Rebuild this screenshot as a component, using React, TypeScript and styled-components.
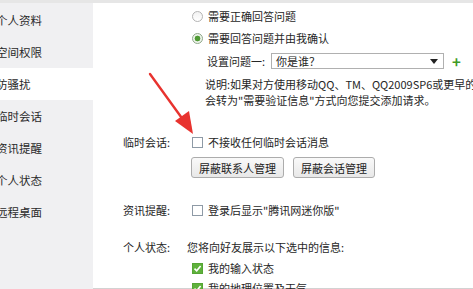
import styled, { createGlobalStyle } from 'styled-components'

const GlobalStyle = createGlobalStyle`
  html, body {
    margin: 0;
    padding: 0;
    background: #ffffff;
  }
  body {
    font-family: "Noto Sans CJK SC", "Liberation Sans", sans-serif;
    font-size: 11px;
    color: #262626;
  }
`

const Window = styled.div`
  position: relative;
  width: 473px;
  height: 289px;
  overflow: hidden;
  display: flex;
  border-top: 3px solid #e6e6e6;
  box-shadow: inset 0 -1px 0 #d2d2d2;
  box-sizing: border-box;
  &::before {
    content: '';
    position: absolute;
    left: 0;
    right: 0;
    top: -1px;
    height: 1px;
    background: #cfcfcf;
  }
`

const Sidebar = styled.nav`
  width: 93px;
  flex-shrink: 0;
  background: #f0f0f2;
  padding-top: 1px;
  overflow: hidden;
`

const NavItem = styled.div<{ $active?: boolean }>`
  height: 32px;
  display: flex;
  align-items: center;
  margin-left: -4px;
  font-size: 11.5px;
  white-space: nowrap;
  background: ${p => (p.$active ? '#ffffff' : 'transparent')};
  color: #2a2a2a;
`

const Main = styled.main`
  flex: 1;
  padding-left: 30px;
  display: flex;
  flex-direction: column;
`

const Section = styled.div<{ $gap: number }>`
  display: grid;
  grid-template-columns: 64px 1fr;
  margin-top: ${p => p.$gap}px;
`

const Label = styled.div`
  height: 22px;
  display: flex;
  align-items: center;
  white-space: nowrap;
`

const Body = styled.div`
  display: flex;
  flex-direction: column;
  min-width: 0;
`

const OptionRow = styled.label<{ $h?: number }>`
  height: ${p => p.$h ?? 22}px;
  display: flex;
  align-items: center;
  gap: 5px;
  padding-left: 5px;
  white-space: nowrap;
`

const Radio = styled.span<{ $checked?: boolean }>`
  width: 11px;
  height: 11px;
  box-sizing: border-box;
  border-radius: 50%;
  border: 1px solid ${p => (p.$checked ? '#8fa88a' : '#b4b4b4')};
  background: ${p =>
    p.$checked
      ? 'radial-gradient(circle, #4f9a34 0 2.6px, #eef4ec 3.2px)'
      : 'linear-gradient(#f2f2f2, #ffffff)'};
`

const Check = styled.span<{ $checked?: boolean }>`
  width: 11px;
  height: 11px;
  box-sizing: border-box;
  border: 1px solid ${p => (p.$checked ? '#55a534' : '#8e9aa6')};
  background: ${p => (p.$checked ? '#5fb13c' : '#ffffff')};
  display: flex;
  align-items: center;
  justify-content: center;
`

const QuestionRow = styled.div`
  height: 24px;
  display: flex;
  align-items: center;
  padding-left: 20px;
  white-space: nowrap;
`

const Select = styled.div`
  margin-left: 6px;
  width: 173px;
  height: 16px;
  box-sizing: border-box;
  border: 1px solid #b0b0b0;
  background: #fff;
  display: flex;
  align-items: center;
  justify-content: space-between;
  padding: 0 5px 0 4px;
`

const Caret = styled.span`
  width: 0;
  height: 0;
  border-left: 4px solid transparent;
  border-right: 4px solid transparent;
  border-top: 5px solid #222;
`

const AddButton = styled.span`
  margin-left: 8px;
  color: #3f9a27;
  font-size: 15px;
  font-weight: bold;
  line-height: 1;
`

const Note = styled.p`
  margin: 3px 0 0 18px;
  line-height: 16px;
  white-space: nowrap;
`

const ButtonRow = styled.div`
  display: flex;
  gap: 9px;
  margin-top: 4px;
  padding-left: 4px;
`

const Button = styled.button<{ $w: number }>`
  width: ${p => p.$w}px;
  height: 21px;
  padding: 0;
  font: inherit;
  color: #222;
  border: 1px solid #acacac;
  border-radius: 3px;
  background: linear-gradient(#f9f9f9, #e8e8e8);
`

const Hint = styled.div`
  height: 22px;
  display: flex;
  align-items: center;
  white-space: nowrap;
`

const Arrow = styled.svg`
  position: absolute;
  left: 0;
  top: -3px;
  pointer-events: none;
`

const navItems = ['个人资料', '空间权限', '防骚扰', '临时会话', '资讯提醒', '个人状态', '远程桌面']

function Tick() {
  return (
    <svg width="9" height="9" viewBox="0 0 9 9">
      <path d="M1.5 4.6 L3.7 6.8 L7.6 2" fill="none" stroke="#fff" strokeWidth="1.6" />
    </svg>
  )
}

export default function App() {
  return (
    <>
      <GlobalStyle />
      <Window>
        <Sidebar>
          {navItems.map(item => (
            <NavItem key={item} $active={item === '防骚扰'}>{item}</NavItem>
          ))}
        </Sidebar>
        <Main>
          <Section $gap={2}>
            <span />
            <Body>
              <OptionRow><Radio />需要正确回答问题</OptionRow>
              <OptionRow><Radio $checked />需要回答问题并由我确认</OptionRow>
              <QuestionRow>
                设置问题一:
                <Select>你是谁？<Caret /></Select>
                <AddButton>+</AddButton>
              </QuestionRow>
              <Note>
                说明:如果对方使用移动QQ、TM、QQ2009SP6或更早的QQ版本，<br />
                会转为"需要验证信息"方式向您提交添加请求。
              </Note>
            </Body>
          </Section>

          <Section $gap={23}>
            <Label>临时会话:</Label>
            <Body>
              <OptionRow><Check />不接收任何临时会话消息</OptionRow>
              <ButtonRow>
                <Button $w={93}>屏蔽联系人管理</Button>
                <Button $w={82}>屏蔽会话管理</Button>
              </ButtonRow>
            </Body>
          </Section>

          <Section $gap={21}>
            <Label>资讯提醒:</Label>
            <Body>
              <OptionRow><Check />登录后显示"腾讯网迷你版"</OptionRow>
            </Body>
          </Section>

          <Section $gap={15}>
            <Label>个人状态:</Label>
            <Body>
              <Hint>您将向好友展示以下选中的信息:</Hint>
              <OptionRow $h={20}><Check $checked><Tick /></Check>我的输入状态</OptionRow>
              <OptionRow $h={20}><Check $checked><Tick /></Check>我的地理位置及天气</OptionRow>
            </Body>
          </Section>
        </Main>

        <Arrow width="473" height="289" viewBox="0 0 473 289">
          <line x1="150" y1="74" x2="184" y2="121" stroke="#e8332f" strokeWidth="2.4" strokeLinecap="round" />
          <polygon points="193,134 175,121 189,111" fill="#e8332f" />
        </Arrow>
      </Window>
    </>
  )
}
